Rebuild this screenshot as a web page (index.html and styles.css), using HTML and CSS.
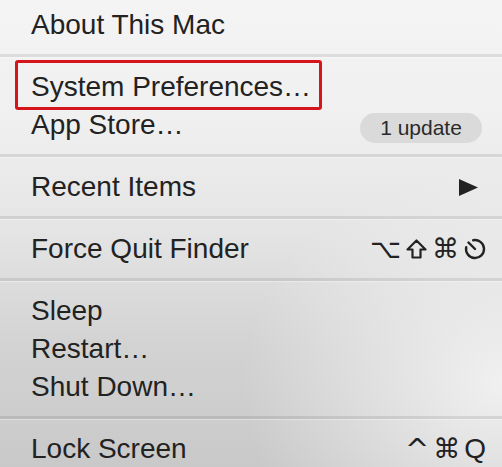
FILE: index.html
```html
<!DOCTYPE html>
<html>
<head>
<meta charset="utf-8">
<link rel="stylesheet" href="styles.css">
</head>
<body>
<div class="menu">
  <div class="item">About This Mac</div>
  <div class="sep"></div>
  <div class="item">System Preferences…<span class="callout"></span></div>
  <div class="item">App Store…<span class="badge">1 update</span></div>
  <div class="sep"></div>
  <div class="item">Recent Items<svg class="arrow" width="19" height="17" viewBox="0 0 19 17"><polygon points="0,0 19,8.5 0,17" fill="#222"/></svg></div>
  <div class="sep"></div>
  <div class="item">Force Quit Finder<span class="keys"><span class="sym">⌥</span><svg class="shift" width="21" height="20" viewBox="0 0 21 20"><path d="M10.5 1.5 L19.5 10.5 H14.5 V18.5 H6.5 V10.5 H1.5 Z" fill="none" stroke="#222" stroke-width="2.2" stroke-linejoin="round"/></svg><span class="sym">⌘</span><svg class="esc" width="22" height="22" viewBox="0 0 22 22"><path d="M9.2 2.2 A9 9 0 1 1 2.2 9.2" fill="none" stroke="#222" stroke-width="2.4" stroke-linecap="round"/><path d="M4.5 4.5 L11 11" stroke="#222" stroke-width="2.4" stroke-linecap="round"/></svg></span></div>
  <div class="sep"></div>
  <div class="item">Sleep</div>
  <div class="item">Restart…</div>
  <div class="item">Shut Down…</div>
  <div class="sep"></div>
  <div class="item">Lock Screen<span class="keys"><span class="sym caret">^</span><span class="sym">⌘</span><span class="letter">Q</span></span></div>
</div>
</body>
</html>
```

FILE: styles.css
```css
html, body {
  margin: 0;
  padding: 0;
}
body {
  width: 502px;
  height: 467px;
  overflow: hidden;
}
.menu {
  height: 467px;
  box-sizing: border-box;
  padding-top: 6px;
  font-family: "Liberation Sans", Arial, sans-serif;
  font-size: 28px;
  color: #222;
  background:
    radial-gradient(ellipse 260px 220px at 100% 82%, rgba(246,246,246,0.85), rgba(246,246,246,0) 100%),
    linear-gradient(to bottom, #f4f4f4 0%, #f0f0f0 25%, #e4e4e4 50%, #d2d2d2 75%, #c9c9c9 100%);
}
.item {
  position: relative;
  height: 38px;
  line-height: 38px;
  padding: 0 16px 0 31px;
  display: flex;
  align-items: center;
  justify-content: space-between;
  white-space: nowrap;
}
.sep {
  height: 3px;
  margin: 10px 0 11px;
  background: rgba(0,0,0,0.09);
  box-shadow: 0 1px 0 rgba(255,255,255,0.35);
}
.callout {
  position: absolute;
  left: 15px;
  top: -8px;
  width: 307px;
  height: 50px;
  box-sizing: border-box;
  border: 3px solid #d5141c;
  border-radius: 3px;
}
.badge {
  margin-top: 6px;
  margin-right: 4px;
  width: 122px;
  height: 30px;
  line-height: 30px;
  border-radius: 15px;
  background: #dadada;
  font-size: 21px;
  text-align: center;
  color: #2a2a2a;
}
.arrow {
  margin-right: 8px;
}
.keys {
  display: flex;
  align-items: center;
  gap: 4px;
}
.sym {
  font-family: "DejaVu Sans", sans-serif;
  font-size: 27px;
  line-height: 38px;
}
.caret {
  font-size: 29px;
}
.letter {
  font-size: 28px;
}
.shift {
  margin: 0 1px;
}
.esc {
  margin-left: 1px;
}
```
